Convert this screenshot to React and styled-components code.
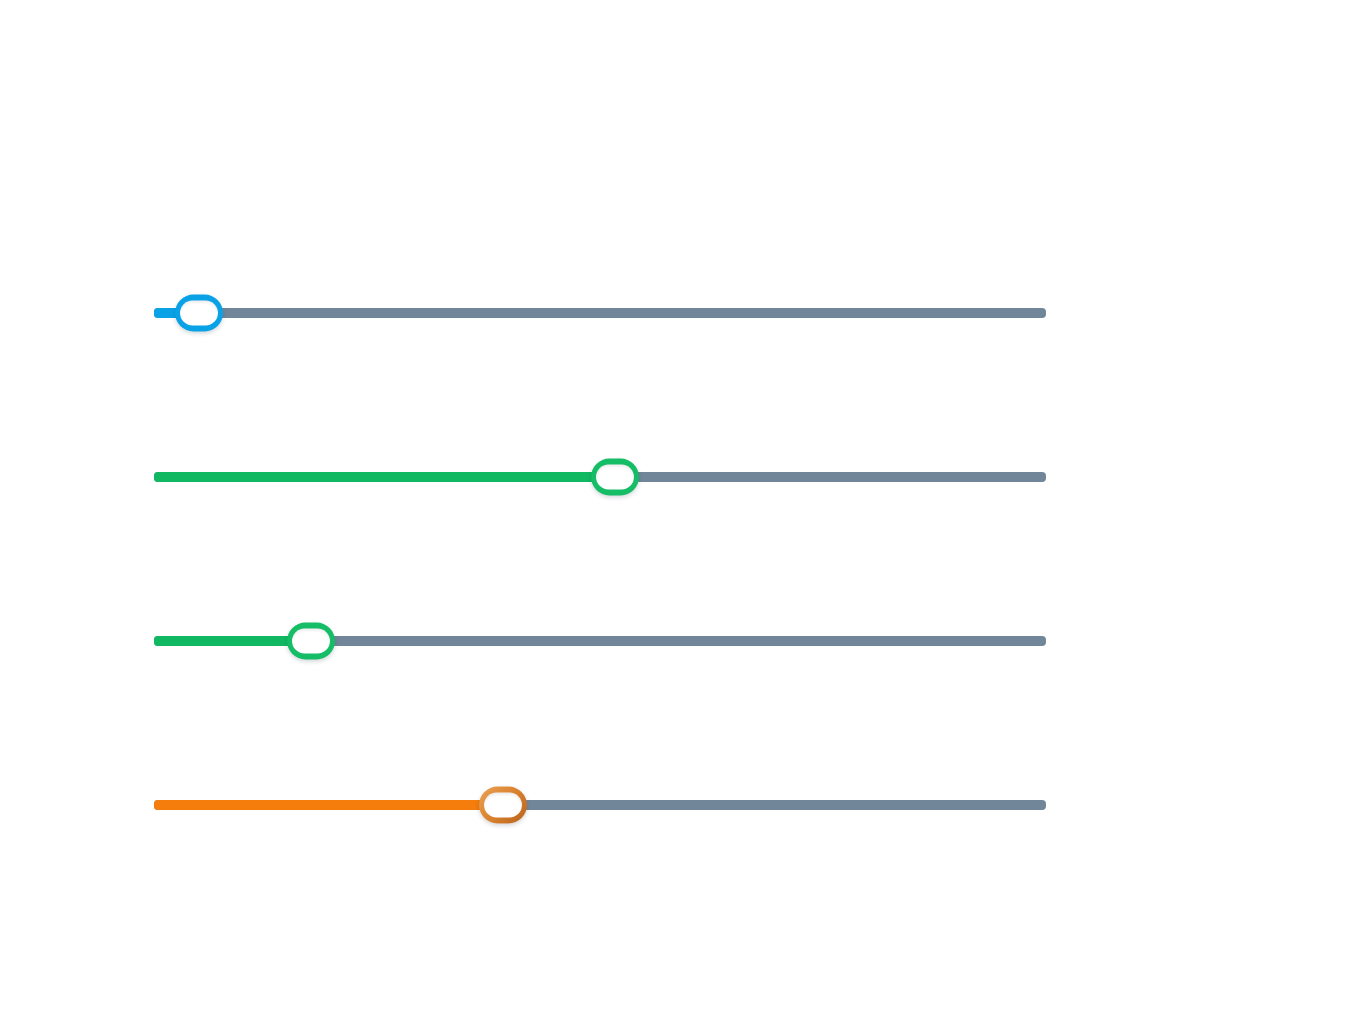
import React from 'react'
import styled, { createGlobalStyle } from 'styled-components'

const GlobalStyle = createGlobalStyle`
  html, body {
    margin: 0;
    padding: 0;
    background: #ffffff;
    font-family: "Inter", "Noto Sans", sans-serif;
  }
`;

const Page = styled.div`
  width: 1360px;
  height: 1020px;
  box-sizing: border-box;
  padding: 295px 0 0 154px;
  display: flex;
  flex-direction: column;
  gap: 128px;
`;

const Row = styled.div`
  width: 892px;
  height: 36px;
  display: flex;
  align-items: center;
`;

const Track = styled.div`
  position: relative;
  width: 100%;
  height: 10px;
  border-radius: 4px;
  background: #728699;
`;

const Fill = styled.div`
  height: 100%;
  border-radius: 4px 0 0 4px;
  background: ${p => p.$color};
`;

// pill-shaped handle: coloured ring around a white face
const Thumb = styled.div`
  position: absolute;
  top: 50%;
  width: 48px;
  height: 37px;
  box-sizing: border-box;
  padding: 6px 5px;
  border-radius: 19px;
  transform: translate(-50%, -50%);
  background: ${p => p.$ring};
  box-shadow: 0 2px 4px rgba(40, 50, 70, 0.2);
`;

const ThumbFace = styled.div`
  width: 100%;
  height: 100%;
  border-radius: 13px;
  background: #ffffff;
  box-shadow: inset 0 2px 3px rgba(0, 0, 0, 0.08);
`;

const sliders = [
  { at: 45, color: '#0aa2e6', ring: '#0aa2e6' },
  { at: 461, color: '#11b862', ring: '#14bd66' },
  { at: 157, color: '#11b862', ring: '#14bd66' },
  { at: 349, color: '#f47d0b', ring: 'linear-gradient(135deg, #eba255 0%, #d9822e 50%, #b8621d 100%)' },
];

const Slider = ({ at, color, ring }) => (
  <Row>
    <Track>
      <Fill $color={color} style={{ width: at }} />
      <Thumb $ring={ring} style={{ left: at }}>
        <ThumbFace />
      </Thumb>
    </Track>
  </Row>
);

const App = () => {
  return (
    <>
      <GlobalStyle />
      <Page>
        {sliders.map((s, i) => (
          <Slider key={i} {...s} />
        ))}
      </Page>
    </>
  )
}

export default App
